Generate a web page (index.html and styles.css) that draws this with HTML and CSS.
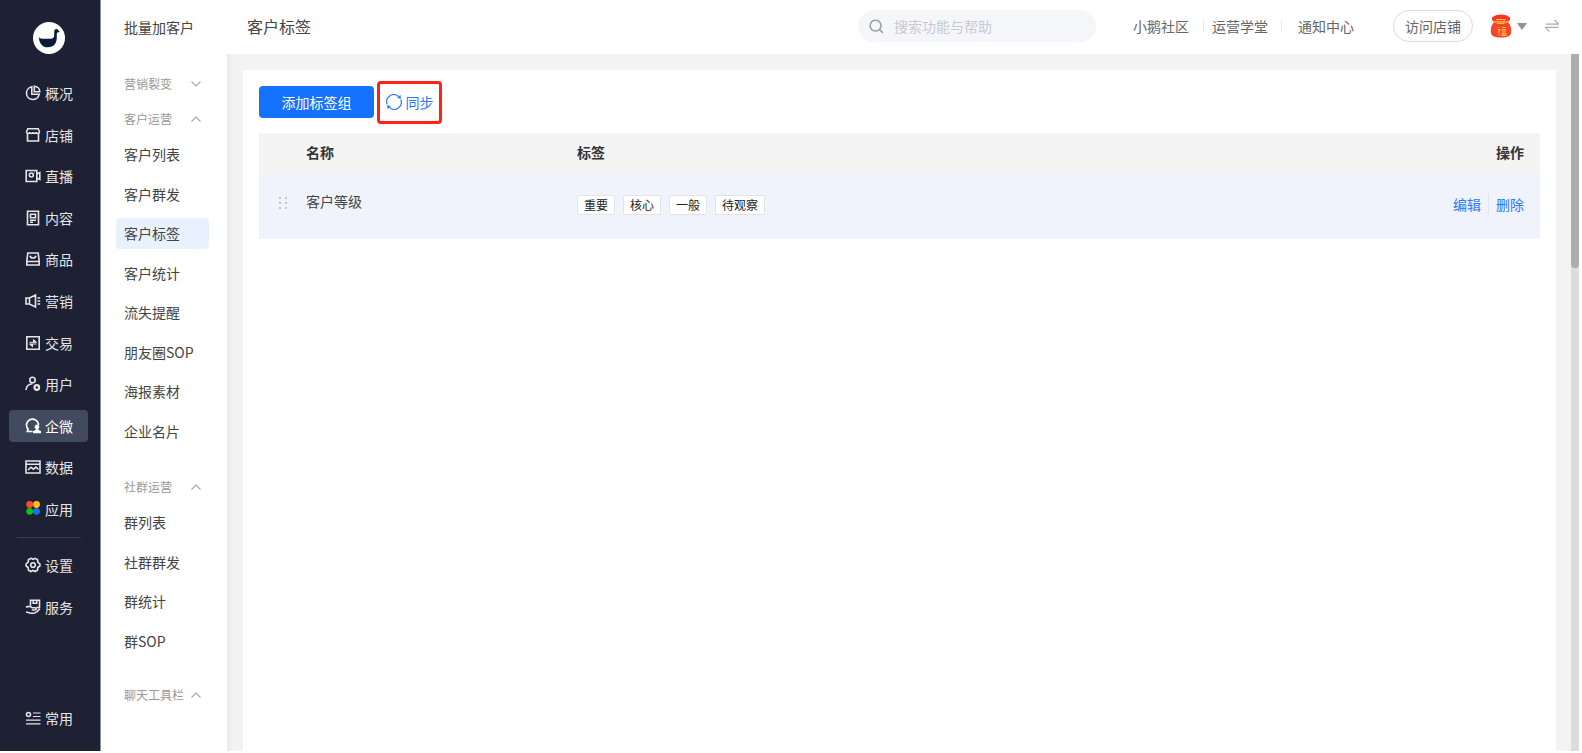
FILE: index.html
```html
<!DOCTYPE html>
<html lang="zh-CN">
<head>
<meta charset="utf-8">
<title>客户标签</title>
<link rel="stylesheet" href="styles.css">
</head>
<body>
<div class="app">
  <nav class="rail" aria-label="主导航">
    <a class="logo" href="#" aria-label="首页">
      <svg viewBox="0 0 32 32"><circle cx="16" cy="16" r="16" fill="#fff"/><path d="M6 15.200c1 1.300 2.500 1.600 5 1.600h6.500c2.700 0 3.700-1.300 3.700-3.800V9.500c0-1.700.8-2.600 2.200-2.600 1.100 0 1.800.6 2 1.500l1.400 1-1.400.8c-1.100.2-1.600.6-1.600 1.600v3.700c0 6-3.300 9.800-8.800 9.800-5.700 0-9-4-9-10.100z" fill="#0b1a3c"/></svg>
    </a>
    <ul class="rail-list rail-main">
      <li><a href="#"><svg viewBox="0 0 16 16"><path d="M6.800 1.800A6.400 6.400 0 1 0 14.200 9.200H6.800z"/><path d="M9.300 1.200v5.500h5.500A5.800 5.800 0 0 0 9.300 1.200z"/></svg>概况</a></li>
      <li><a href="#"><svg viewBox="0 0 16 16"><path d="M2.500 6.500v7.500h11V6.500M2.800 1.800h10.400l1.300 3c0 2.200-3 2.200-3.300.3-.3 1.900-3 1.900-3.200 0-.2 1.900-2.900 1.900-3.200 0-.3 1.900-3.300 1.900-3.300-.3z"/></svg>店铺</a></li>
      <li><a href="#"><svg viewBox="0 0 16 16"><path d="M1.200 2.500h10.600v11H1.200zM12 6l2.800-1.500v7L12 10"/><circle cx="6.300" cy="7" r="2"/><path d="M9.500 4.500h.5"/></svg>直播</a></li>
      <li><a href="#"><svg viewBox="0 0 16 16"><path d="M2.500 1.300h11v13.400h-11zM5.500 4.300h5v3.500h-5zM5 10.200h6M5 12.300h3"/></svg>内容</a></li>
      <li><a href="#"><svg viewBox="0 0 16 16"><path d="M2.800 2h10.400l1 8v4H1.800v-4zM5 4.800c.8 3 5.200 3 6 0M2 10.500h12"/></svg>商品</a></li>
      <li><a href="#"><svg viewBox="0 0 16 16"><path d="M1 5h3.500l6-3v12l-6-3H1zM4.500 5v6M12.500 5h2.700M12.500 8h2.700M12.500 11h2.700"/></svg>营销</a></li>
      <li><a href="#"><svg viewBox="0 0 16 16"><path d="M1.800 1.800h12.400v12.400H1.800z"/><path d="M4.500 7.300h7L8.500 4.500v2.800M11.500 9H4.500l3 2.800V9" fill="currentColor" stroke-width="1"/></svg>交易</a></li>
      <li><a href="#"><svg viewBox="0 0 16 16"><circle cx="7.500" cy="4" r="2.700"/><path d="M1 14c.3-4 2.500-6 6.500-6.300"/><circle cx="11.800" cy="11.500" r="2.300" stroke-width="2.200"/></svg>用户</a></li>
      <li><a class="active" href="#"><svg viewBox="0 0 16 16"><path d="M7.500 13.500H2.300l.9-2.200A6 6 0 1 1 13.500 7" stroke-width="1.700"/><path d="M12 6.500a2.400 2.400 0 0 1 1.400 4.300l-.1 1.200 2.700 1v2.300H8V13l2.700-1-.1-1.200A2.400 2.400 0 0 1 12 6.500z" fill="currentColor" stroke="none"/></svg>企微</a></li>
      <li><a href="#"><svg viewBox="0 0 16 16"><path d="M1 2h14v12H1zM1 5.200h14M3 11l3-2.800 2.500 2L11 8l2.500 2.500" /></svg>数据</a></li>
      <li><a href="#"><svg viewBox="0 0 16 16" stroke="none"><circle cx="4.700" cy="3.500" r="3.400" fill="#ff4d2f"/><circle cx="11.500" cy="3.500" r="3.400" fill="#ffc414"/><circle cx="4.700" cy="10.300" r="3.400" fill="#13c213"/><circle cx="11.500" cy="10.300" r="3.400" fill="#1472ff"/></svg>应用</a></li>
    </ul>
    <ul class="rail-list rail-extra">
      <li><a href="#"><svg viewBox="0 0 16 16"><path d="M5.800 1.300 8 2.300l2.200-1 2.400 1.500.2 2.300L14.900 7v2l-2.100 1.500-.2 2.500-2.400 1.500L8 13.500l-2.200 1L3.400 13l-.2-2.500L1.100 9V7l2.100-1.900.2-2.300z"/><circle cx="8" cy="8" r="2.300"/></svg>设置</a></li>
      <li><a href="#"><svg viewBox="0 0 16 16"><path d="M5.500 6.500V1.300h9v7.200h-3M8.200 1.300v3h3.500v-3M1 8.200c3-1.500 5-.8 6.200.5h3c1.500.3 1.300 2.300-.2 2.300H6.800M1 13c3.500.5 5 1.800 8.500 1 2.200-.6 4-2.500 5.200-4.300"/></svg>服务</a></li>
    </ul>
    <a class="rail-common" href="#"><svg viewBox="0 0 16 16"><circle cx="3.500" cy="4.500" r="2"/><path d="M8 3h7.500M8 6.500h7.500M1 10.200h14.500M1 13.800h14.500" stroke-width="1.200"/></svg>常用</a>
  </nav>

  <aside class="side">
    <h2 class="side-title">批量加客户</h2>
    <button class="group">营销裂变<svg viewBox="0 0 12 12"><path d="m1.500 3.500 4.500 4.500 4.500-4.500"/></svg></button>
    <button class="group">客户运营<svg viewBox="0 0 12 12"><path d="m1.500 8.500 4.500-4.500 4.500 4.500"/></svg></button>
    <ul class="side-list side-customers">
      <li><a href="#">客户列表</a></li>
      <li><a href="#">客户群发</a></li>
      <li><a class="active" href="#">客户标签</a></li>
      <li><a href="#">客户统计</a></li>
      <li><a href="#">流失提醒</a></li>
      <li><a href="#">朋友圈SOP</a></li>
      <li><a href="#">海报素材</a></li>
      <li><a href="#">企业名片</a></li>
    </ul>
    <button class="group">社群运营<svg viewBox="0 0 12 12"><path d="m1.500 8.500 4.500-4.500 4.500 4.500"/></svg></button>
    <ul class="side-list side-groups">
      <li><a href="#">群列表</a></li>
      <li><a href="#">社群群发</a></li>
      <li><a href="#">群统计</a></li>
      <li><a href="#">群SOP</a></li>
    </ul>
    <button class="group">聊天工具栏<svg viewBox="0 0 12 12"><path d="m1.500 8.500 4.500-4.500 4.500 4.500"/></svg></button>
  </aside>

  <div class="content">
    <header class="top">
      <h1>客户标签</h1>
      <label class="search">
        <svg viewBox="0 0 16 16"><circle cx="7" cy="7" r="5.800"/><path d="m11.200 11.200 3.600 3.600"/></svg>
        <input type="search" placeholder="搜索功能与帮助" aria-label="搜索功能与帮助">
      </label>
      <div class="links">
        <a href="#">小鹅社区</a><a href="#">运营学堂</a><a href="#">通知中心</a>
      </div>
      <button class="visit">访问店铺</button>
      <button class="account" aria-label="账号">
        <svg class="bag" viewBox="0 0 22 24"><path d="M4.500 8C1.500 10.500.5 14 .8 18c.3 3.800 3 5.500 10.200 5.500s9.900-1.700 10.200-5.500c.3-4-.7-7.500-3.700-10z" fill="#f9422c"/><path d="M2 3.500C4.500 1.500 7 .5 11 .5s6.500 1 9 3c.6 2.500-1 4-3 5H5c-2-1-3.600-2.500-3-5z" fill="#fb3426"/><path d="M3.500 7.200c4.500 1.300 10.500 1.300 15 0" stroke="#ff8b35" stroke-width="1.500" fill="none"/><path d="M6 5.500h10M8 5.500v4h6v-4M7 9.500l-2-2M15 9.500l2-2M9.500 7.500h3M8 13l1 1M7.500 15.500h3l-3 3.500M9 16v5.500M12 13.500h4M12.300 15.500h3.400v1.700h-3.400zM12 19h4v2.500h-4zM14 19v2.500" stroke="#ffc23d" fill="none"/></svg>
        <svg class="caret" viewBox="0 0 10 7"><path d="M0 0h10L5 7z" fill="#909399"/></svg>
      </button>
      <button class="swap" aria-label="切换"><svg viewBox="0 0 14 14"><path d="M.5 5.200h13L9.500 1M13.500 8.300H.5l4 4.400"/></svg></button>
    </header>
    <main class="stage">
      <section class="card">
        <div class="toolbar">
          <button class="primary">添加标签组</button>
          <button class="sync"><svg viewBox="0 0 16 16"><path d="M1.300 10.500A7 7 0 0 1 12.500 2.600M14.700 5.500A7 7 0 0 1 3.500 13.400"/><path d="m11.200 3.900 3.800.8-.6-4zM4.800 12.100l-3.800-.8.600 4z" fill="currentColor" stroke="none"/></svg>同步</button>
        </div>
        <table class="tags">
          <thead><tr><th class="grip-col"></th><th class="name-col">名称</th><th>标签</th><th class="ops">操作</th></tr></thead>
          <tbody><tr>
            <td class="grip"><svg viewBox="0 0 10 12"><path fill="#c3c5ca" d="M1 0h2v2H1zM7 0h2v2H7zM1 5h2v2H1zM7 5h2v2H7zM1 10h2v2H1zM7 10h2v2H7z"/></svg></td>
            <td class="name">客户等级</td>
            <td class="chip-cell"><div class="chips"><span>重要</span><span>核心</span><span>一般</span><span>待观察</span></div></td>
            <td class="ops"><a href="#">编辑</a><a href="#">删除</a></td>
          </tr></tbody>
        </table>
      </section>
      <div class="scroll"><div class="thumb"></div></div>
    </main>
  </div>
</div>
</body>
</html>
```
FILE: styles.css
```css
* { box-sizing: border-box; }
body {
  margin: 0;
  background: #fff;
  color: #444;
  font: 14px/20px "Noto Sans CJK SC", sans-serif;
}
a { color: inherit; text-decoration: none; }
ul { list-style: none; margin: 0; padding: 0; }
h1, h2 { margin: 0; font-size: 14px; font-weight: 400; }
button { font: inherit; color: inherit; background: none; border: 0; padding: 0; cursor: pointer; }
svg { fill: none; flex: none; display: block; }

.app { display: flex; height: 100vh; padding: 0 3px 2px 0; overflow: hidden; }

.rail {
  width: 101px;
  flex: none;
  display: flex;
  flex-direction: column;
  background: #1d2133;
  border-right: 1px solid #8e909a;
  color: #e4e5e8;
}
.logo { width: 32px; height: 32px; margin: 22px 0 23px 33px; }
.rail-list { display: flex; flex-direction: column; justify-content: space-between; padding: 0 12px 0 9px; }
.rail-main { height: 448px; }
.rail-extra { height: 86px; margin: 12px 19px 0 17px; padding: 11px 0 0; border-top: 1px solid #383c4e; }
.rail-extra a { margin-left: -8px; }
.rail-list a, .rail-common {
  display: flex;
  align-items: center;
  gap: 4px;
  height: 32px;
  padding-left: 16px;
  border-radius: 4px;
  white-space: nowrap;
}
.rail-list svg, .rail-common svg { width: 16px; height: 16px; stroke: currentColor; stroke-width: 1.6; }
.rail-list svg[stroke="none"] { stroke: none; }
.rail-list .active { background: #424a60; color: #fff; }
.rail-common { margin: auto 0 17px 9px; }

.side { width: 126px; flex: none; background: #fff; padding: 17px 18px 0 15px; }
.side-title { padding-left: 8px; margin-bottom: 29px; }
.group {
  display: flex;
  align-items: center;
  justify-content: space-between;
  width: 100%;
  height: 35px;
  padding: 0 7px 0 8px;
  color: #999;
  font-size: 12px;
}
.group svg { width: 12px; height: 12px; stroke: #aaa; stroke-width: 1.2; }
.side-list { display: flex; flex-direction: column; justify-content: space-between; }
.side-list a { display: block; height: 31px; line-height: 30px; padding-left: 8px; border-radius: 4px; }
.side-list .active { background: #e8f2ff; }
.side-customers { height: 308px; margin: 3px 0 22px; }
.side-groups { height: 150px; margin: 3px 0 20px; }

.content { flex: 1; min-width: 0; display: flex; flex-direction: column; }
.top { height: 54px; flex: none; display: flex; align-items: center; padding: 0 20px 2px; color: #666; }
.top h1 { flex: 1; font-size: 16px; color: #444; }
.search {
  display: flex;
  align-items: center;
  gap: 10px;
  width: 238px;
  height: 32px;
  margin-right: 37px;
  padding: 0 11px;
  border-radius: 16px;
  background: #f5f6fa;
}
.search svg { width: 15px; height: 15px; stroke: #999; stroke-width: 1.6; }
.search input { width: 160px; border: 0; padding: 0; background: none; font: inherit; outline: 0; }
.search input::placeholder { color: #c8cacf; opacity: 1; }
.links { display: flex; }
.links a + a { margin-left: 23px; }
.links a + a + a { margin-left: 30px; }
.links a { position: relative; }
.links a + a::before { content: ""; position: absolute; left: -9px; top: 4px; height: 12px; border-left: 1px solid #e8e8e8; }
.links a + a + a::before { left: -17px; }
.visit { width: 80px; height: 32px; margin-left: 39px; border: 1px solid #dcdcdc; border-radius: 16px; }
.account { display: flex; align-items: center; gap: 5px; margin-left: 17px; }
.bag { width: 22px; height: 24px; }
.caret { width: 10px; height: 7px; }
.swap { margin-left: 18px; }
.swap svg { width: 14px; height: 14px; stroke: #aaa; stroke-width: 1.2; }

.stage { flex: 1; min-height: 0; display: flex; background: linear-gradient(90deg, #e9e9e9, #f3f3f3 7px); padding: 16px 0 0 16px; }
.card { flex: 1; background: #fff; padding: 16px; }
.toolbar { display: flex; align-items: center; height: 32px; gap: 3px; margin-bottom: 15px; }
.primary { width: 115px; height: 32px; border-radius: 4px; background: #1472ff; color: #fff; }
.sync {
  display: flex;
  align-items: center;
  justify-content: center;
  gap: 4px;
  width: 65px;
  height: 43px;
  border: 3px solid #fb2316;
  border-radius: 4px;
  color: #2b78ff;
}
.sync svg { width: 16px; height: 16px; stroke: currentColor; stroke-width: 1.2; }

.tags { width: 100%; border-collapse: collapse; table-layout: fixed; }
.tags th { height: 41px; padding: 0 0 3px; background: #f4f4f4; color: #333; font-weight: 700; text-align: left; }
.tags td { height: 65px; padding: 0; background: #f0f3fc; }
.tags .grip-col { width: 47px; }
.tags .name-col { width: 271px; }
.tags .ops { width: 160px; padding-right: 16px; text-align: right; }
.grip svg { width: 10px; height: 12px; margin: 0 0 8px 19px; }
.tags .name { padding-bottom: 11px; }
.tags .chip-cell { padding-bottom: 3px; }
.tags td.ops { padding-bottom: 6px; }
.chips { display: flex; gap: 8px; }
.chips span { padding: 0 6px; border: 1px solid #e4e4e6; border-radius: 2px; background: #fff; color: #222; font-size: 12px; line-height: 18px; }
td.ops a { color: #2b78ff; }
td.ops a + a { margin-left: 7px; padding-left: 7px; border-left: 1px solid #e2e5ee; }

.scroll { width: 8px; margin: -16px 0 0 15px; background: #dcdcdc; }
.thumb { height: 214px; border-radius: 0 0 4px 4px; background: #adadad; }
```
